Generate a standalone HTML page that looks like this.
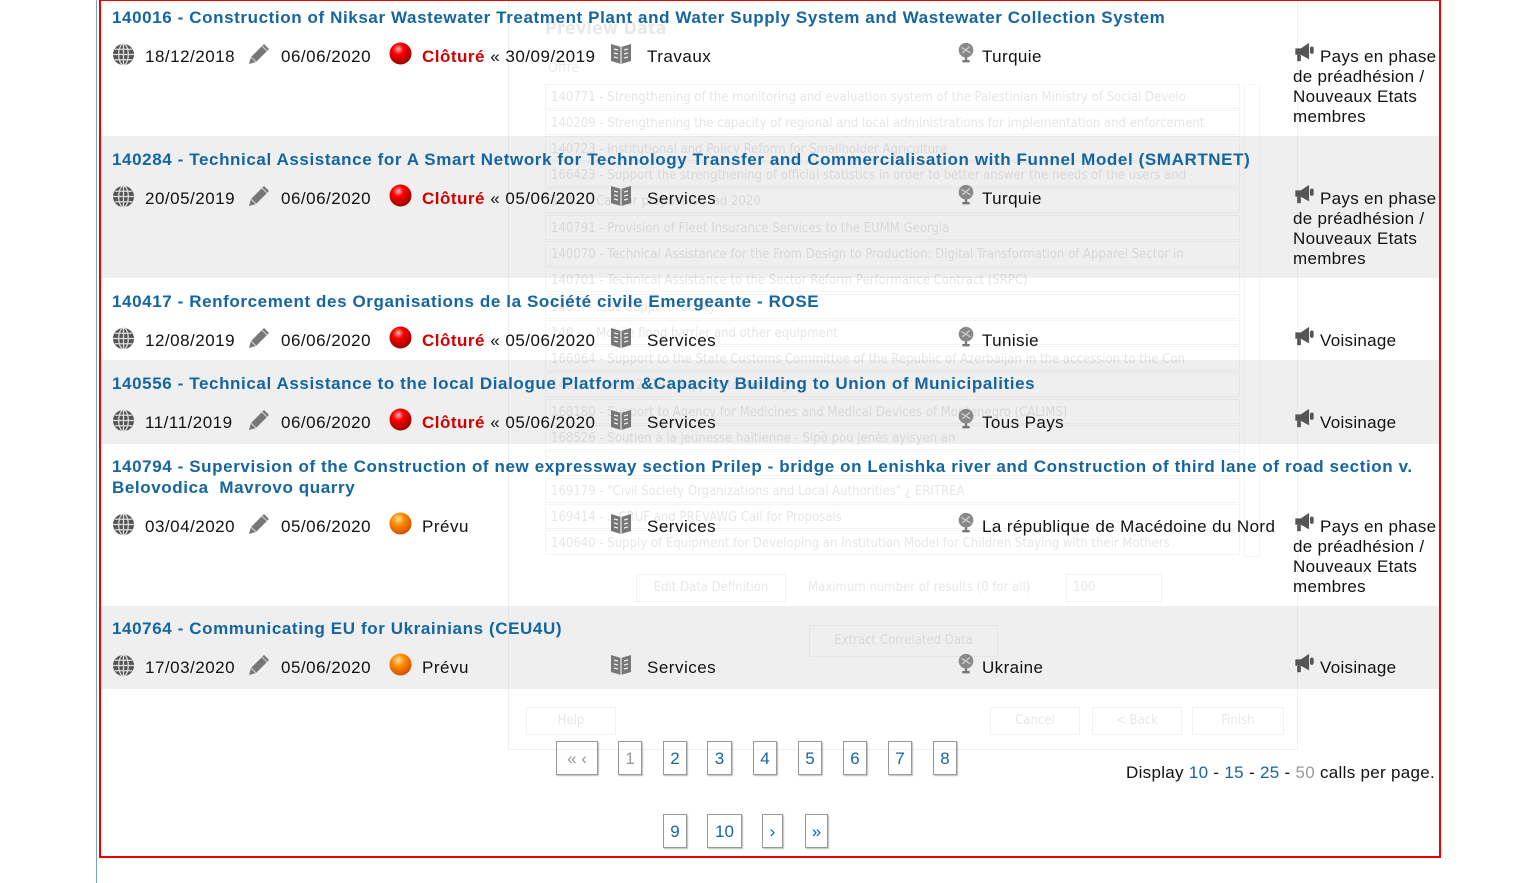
<!DOCTYPE html>
<html><head><meta charset="utf-8"><style>
body{margin:0;width:1540px;height:883px;position:relative;background:#fff;overflow:hidden;font-family:"Liberation Sans",Arial,sans-serif;}
.a{position:absolute;white-space:nowrap;}
.bg{position:absolute;left:100px;width:1339px;background:#efefef;}
.t{position:absolute;left:112px;font-weight:bold;font-size:17px;color:#1565a0;line-height:21px;white-space:nowrap;letter-spacing:0.6px;}
.d{position:absolute;font-size:17px;color:#111;line-height:20px;white-space:nowrap;letter-spacing:0.5px;}
.red{color:#d40000;font-weight:bold;}
.ic{position:absolute;}
.dlg{position:absolute;left:508px;top:0;width:790px;height:750px;opacity:.12;font-family:"DejaVu Sans Condensed","Liberation Sans",sans-serif;}
.dlg .r{position:absolute;left:37px;width:695px;height:25px;border:1px solid #9ab;font-size:13px;color:#333;line-height:25px;padding-left:5px;overflow:hidden;white-space:nowrap;box-sizing:border-box;}
.dlg .b{position:absolute;border:1px solid #999;font-size:13px;color:#444;text-align:center;line-height:26px;height:28px;box-sizing:border-box;}
.pg{position:absolute;height:34px;border:1px solid #999;box-shadow:1px 1px 1px #bbb;font-size:17px;color:#1565a0;text-align:center;line-height:33px;box-sizing:border-box;}
.m{position:absolute;left:1293px;width:150px;font-size:17px;line-height:20px;color:#111;letter-spacing:0.3px;}
</style></head><body>
<div class="a" style="left:96px;top:0;width:1px;height:883px;background:#7aa3c9"></div>
<div class="bg" style="top:136px;height:142px"></div>
<div class="bg" style="top:360px;height:84px"></div>
<div class="bg" style="top:606px;height:83px"></div>

<div class="dlg">
<div class="a" style="left:37px;top:18px;font-size:18px;font-weight:bold;color:#555">Preview Data</div>
<div class="a" style="left:40px;top:60px;font-size:14px;color:#555">Offre</div>
<div class="r" style="top:84px">140771 - Strengthening of the monitoring and evaluation system of the Palestinian Ministry of Social Develo</div>
<div class="r" style="top:110px">140209 - Strengthening the capacity of regional and local administrations for implementation and enforcement</div>
<div class="r" style="top:136px">140723 - Institutional and Policy Reform for Smallholder Agriculture</div>
<div class="r" style="top:162px">166423 - Support the strengthening of official statistics in order to better answer the needs of the users and</div>
<div class="r" style="top:188px">144... - Call for proposals ...ad 2020</div>
<div class="r" style="top:215px">140791 - Provision of Fleet Insurance Services to the EUMM Georgia</div>
<div class="r" style="top:241px">140070 - Technical Assistance for the From Design to Production: Digital Transformation of Apparel Sector in</div>
<div class="r" style="top:267px">140701 - Technical Assistance to the Sector Reform Performance Contract (SRPC)</div>
<div class="r" style="top:294px">140... - ...ue Support Facility</div>
<div class="r" style="top:320px">140... - Mobile flood barrier and other equipment</div>
<div class="r" style="top:346px">166964 - Support to the State Customs Committee of the Republic of Azerbaijan in the accession to the Con</div>
<div class="r" style="top:372px">140... - ...vina 2019 - Support to existing</div>
<div class="r" style="top:399px">168180 - Support to Agency for Medicines and Medical Devices of Montenegro (CALIMS)</div>
<div class="r" style="top:425px">168526 - Soutien à la jeunesse haïtienne - Sipò pou jenès ayisyen an</div>
<div class="r" style="top:451px">...</div>
<div class="r" style="top:478px">169179 - "Civil Society Organizations and Local Authorities" ¿ ERITREA</div>
<div class="r" style="top:504px">169414 - ...CRUF and PREVAWG Call for Proposals</div>
<div class="r" style="top:530px">140640 - Supply of Equipment for Developing an Institution Model for Children Staying with their Mothers</div>
<div class="a" style="left:736px;top:84px;width:14px;height:471px;border:1px solid #bbb"></div>
<div class="b" style="left:128px;top:574px;width:150px">Edit Data Definition</div>
<div class="a" style="left:300px;top:580px;font-size:13px;color:#444">Maximum number of results (0 for all)</div>
<div class="b" style="left:558px;top:574px;width:96px;text-align:left;padding-left:6px">100</div>
<div class="b" style="left:301px;top:625px;width:189px;height:32px;line-height:30px">Extract Correlated Data</div>
<div class="a" style="left:0;top:694px;width:790px;border-top:1px solid #bbb"></div>
<div class="b" style="left:18px;top:707px;width:90px">Help</div>
<div class="b" style="left:482px;top:707px;width:90px">Cancel</div>
<div class="b" style="left:584px;top:707px;width:90px">&lt; Back</div>
<div class="b" style="left:684px;top:707px;width:92px">Finish</div>
<div class="a" style="left:0;top:0;width:788px;height:748px;border:1px solid #888"></div>
</div>

<div class="a" style="left:99px;top:0;width:1342px;height:858px;border:1px solid #e00;border-width:1px 2px 2px 2px;box-sizing:border-box"></div>

<svg width="0" height="0" style="position:absolute">
<defs>
<symbol id="glb" viewBox="0 0 24 24"><circle cx="12" cy="12" r="11" fill="#555"/><g stroke="#ddd" stroke-width="1.3" fill="none"><ellipse cx="12" cy="12" rx="5" ry="11"/><line x1="12" y1="1" x2="12" y2="23"/><line x1="1" y1="12" x2="23" y2="12"/><line x1="3" y1="6.5" x2="21" y2="6.5"/><line x1="3" y1="17.5" x2="21" y2="17.5"/></g></symbol>
<symbol id="pen" viewBox="0 0 24 24"><path d="M17 2l5 5-13 13-7 2 2-7z" fill="#777"/><path d="M4 15l5 5" stroke="#ccc" stroke-width="1.2"/><path d="M15 4l5 5" stroke="#ccc" stroke-width="1.2"/></symbol>
<radialGradient id="rg" cx=".4" cy=".3" r=".7"><stop offset="0" stop-color="#ffb0b0"/><stop offset=".35" stop-color="#f00"/><stop offset="1" stop-color="#900"/></radialGradient>
<radialGradient id="og" cx=".4" cy=".3" r=".7"><stop offset="0" stop-color="#ffe0a0"/><stop offset=".4" stop-color="#ff8c00"/><stop offset="1" stop-color="#d05000"/></radialGradient>
<symbol id="bk" viewBox="0 0 24 24"><path d="M2 3l10 3 10-3v17l-10 3-10-3z" fill="#777"/><path d="M12 6v17" stroke="#eee" stroke-width="1.2"/><g stroke="#eee" stroke-width="1.3"><path d="M5 8l4 1M5 12l4 1M5 16l4 1M15 9l4-1M15 13l4-1M15 17l4-1"/></g></symbol>
<symbol id="gs" viewBox="0 0 24 24"><circle cx="12" cy="10" r="8" fill="#888"/><path d="M7 7l10 6M8 13l8-7" stroke="#ccc" stroke-width="1.5"/><path d="M12 18v3M8 22h8" stroke="#777" stroke-width="2.5"/></symbol>
<symbol id="mg" viewBox="0 0 24 24"><path d="M2 8h6l9-6v18l-9-5H2z" fill="#555"/><rect x="4" y="15" width="4" height="7" fill="#555"/><rect x="18" y="6" width="4" height="8" rx="2" fill="#555"/></symbol>
</defs></svg>

<div class="t" style="top:7px">140016 - Construction of Niksar Wastewater Treatment Plant and Water Supply System and Wastewater Collection System</div>
<div class="t" style="top:149px">140284 - Technical Assistance for A Smart Network for Technology Transfer and Commercialisation with Funnel Model (SMARTNET)</div>
<div class="t" style="top:291px">140417 - Renforcement des Organisations de la Société civile Emergeante - ROSE</div>
<div class="t" style="top:373px">140556 - Technical Assistance to the local Dialogue Platform &amp;Capacity Building to Union of Municipalities</div>
<div class="t" style="top:456px">140794 - Supervision of the Construction of new expressway section Prilep - bridge on Lenishka river and Construction of third lane of road section v.<br>Belovodica&nbsp; Mavrovo quarry</div>
<div class="t" style="top:618px">140764 - Communicating EU for Ukrainians (CEU4U)</div>

<div id="rows"></div>
<script>
var rows=[
[57,"18/12/2018","06/06/2020",1,"30/09/2019","Travaux","Turquie",1],
[199,"20/05/2019","06/06/2020",1,"05/06/2020","Services","Turquie",1],
[341,"12/08/2019","06/06/2020",1,"05/06/2020","Services","Tunisie",0],
[423,"11/11/2019","06/06/2020",1,"05/06/2020","Services","Tous Pays",0],
[527,"03/04/2020","05/06/2020",0,"","Services","La république de Macédoine du Nord",1],
[668,"17/03/2020","05/06/2020",0,"","Services","Ukraine",0]];
var h="";
rows.forEach(function(r){var y=r[0],t=y-10;
h+='<svg class="ic" style="left:112px;top:'+(y-14)+'px" width="23" height="23"><use href="#glb"/></svg>';
h+='<div class="d" style="left:145px;top:'+t+'px">'+r[1]+'</div>';
h+='<svg class="ic" style="left:247px;top:'+(y-15)+'px" width="24" height="24"><use href="#pen"/></svg>';
h+='<div class="d" style="left:281px;top:'+t+'px">'+r[2]+'</div>';
h+='<svg class="ic" style="left:389px;top:'+(y-15)+'px" width="23" height="23"><circle cx="11.5" cy="11.5" r="11" fill="url(#'+(r[3]?'rg':'og')+')"/></svg>';
h+='<div class="d" style="left:422px;top:'+t+'px">'+(r[3]?'<span class="red">Clôturé</span> « '+r[4]:'Prévu')+'</div>';
h+='<svg class="ic" style="left:609px;top:'+(y-16)+'px" width="24" height="24"><use href="#bk"/></svg>';
h+='<div class="d" style="left:647px;top:'+t+'px">'+r[5]+'</div>';
h+='<svg class="ic" style="left:955px;top:'+(y-17)+'px" width="22" height="24"><use href="#gs"/></svg>';
h+='<div class="d" style="left:982px;top:'+t+'px;letter-spacing:0.4px">'+r[6]+'</div>';
h+='<svg class="ic" style="left:1293px;top:'+(y-16)+'px" width="23" height="22"><use href="#mg"/></svg>';
h+='<div class="m" style="top:'+t+'px"><span style="padding-left:27px"></span>'+(r[7]?'Pays en phase de préadhésion / Nouveaux Etats membres':'Voisinage')+'</div>';
});
document.getElementById('rows').innerHTML=h;
</script>

<div class="pg" style="left:556px;top:741px;width:42px;color:#999">« ‹</div>
<div class="pg" style="left:618px;top:741px;width:24px;color:#999">1</div>
<div class="pg" style="left:663px;top:741px;width:24px">2</div>
<div class="pg" style="left:707px;top:741px;width:25px">3</div>
<div class="pg" style="left:753px;top:741px;width:24px">4</div>
<div class="pg" style="left:798px;top:741px;width:24px">5</div>
<div class="pg" style="left:843px;top:741px;width:24px">6</div>
<div class="pg" style="left:888px;top:741px;width:24px">7</div>
<div class="pg" style="left:933px;top:741px;width:24px">8</div>
<div class="pg" style="left:663px;top:814px;width:24px">9</div>
<div class="pg" style="left:707px;top:814px;width:35px">10</div>
<div class="pg" style="left:762px;top:814px;width:21px">›</div>
<div class="pg" style="left:805px;top:814px;width:23px">»</div>
<div class="d" style="left:1126px;top:763px;letter-spacing:0.3px">Display <span style="color:#1565a0">10</span> - <span style="color:#1565a0">15</span> - <span style="color:#1565a0">25</span> - <span style="color:#999">50</span> calls per page.</div>
</body></html>
